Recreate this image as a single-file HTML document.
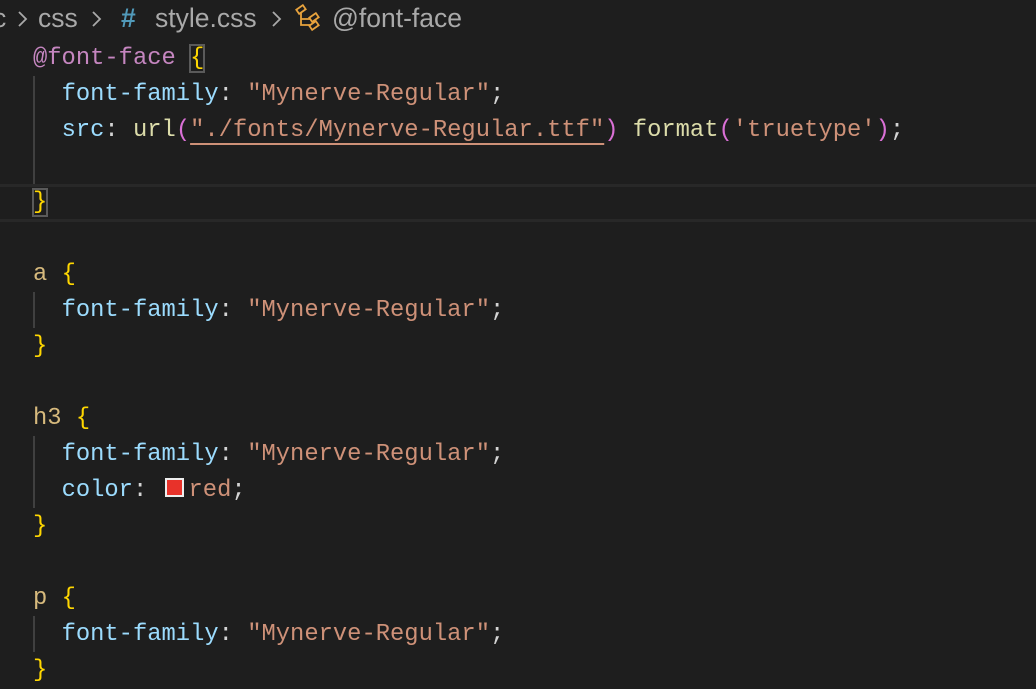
<!DOCTYPE html>
<html><head><meta charset="utf-8"><style>
html,body{margin:0;padding:0;background:#1e1e1e;width:1036px;height:676px;overflow:hidden}
.b{position:absolute;top:3px;font:26.5px/30px "Liberation Sans",sans-serif;color:#a9a9a9;white-space:pre}
.ch{position:absolute;top:10px}
.l{position:absolute;left:33px;font:23.8px/36px "Liberation Mono",monospace;white-space:pre;color:#d4d4d4}
.g{position:absolute;left:33px;width:2px;background:#404040}
.hl{position:absolute;left:0;width:1036px;top:184px;height:32px;border-top:3px solid #282828;border-bottom:3px solid #282828}
.k{color:#c586c0}.p{color:#9cdcfe}.s{color:#ce9178}.y{color:#ffd700}.f{color:#dcdcaa}.t{color:#d7ba7d}.m{color:#da70d6}
.bx{outline:2px solid #5a5a5a;outline-offset:-1px}
</style></head><body>
<div class="hl"></div>
<div class="b" style="left:-7px">c</div>
<svg class="ch" style="left:16px" width="12" height="18" viewBox="0 0 12 18"><path d="M3 2l7 7-7 7" fill="none" stroke="#a9a9a9" stroke-width="1.8"/></svg>
<div class="b" style="left:38px">css</div>
<svg class="ch" style="left:90px" width="12" height="18" viewBox="0 0 12 18"><path d="M3 2l7 7-7 7" fill="none" stroke="#a9a9a9" stroke-width="1.8"/></svg>
<div class="b" style="left:121px;color:#519aba;font-weight:bold">#</div>
<div class="b" style="left:155px">style.css</div>
<svg class="ch" style="left:270px" width="12" height="18" viewBox="0 0 12 18"><path d="M3 2l7 7-7 7" fill="none" stroke="#a9a9a9" stroke-width="1.8"/></svg>
<svg style="position:absolute;left:294px;top:4px" width="30" height="30" viewBox="0 0 30 30"><g fill="none" stroke="#e8a33d" stroke-width="1.8"><rect x="3" y="3" width="8" height="5" transform="rotate(-35 7 5.5)"/><path d="M7 9v12h9M7 15h9"/><rect x="16" y="11" width="8" height="5" transform="rotate(-35 20 13.5)"/><rect x="16" y="19" width="8" height="5" transform="rotate(-35 20 21.5)"/></g></svg>
<div class="b" style="left:332px">@font-face</div>
<div class="g" style="top:76px;height:108px"></div>
<div class="g" style="top:292px;height:36px"></div>
<div class="g" style="top:436px;height:72px"></div>
<div class="g" style="top:616px;height:36px"></div>
<div class="l" style="top:41px"><span class="k">@font-face</span> <span class="y bx">{</span></div>
<div class="l" style="top:77px">  <span class="p">font-family</span>: <span class="s">"Mynerve-Regular"</span>;</div>
<div class="l" style="top:113px">  <span class="p">src</span>: <span class="f">url</span><span class="m">(</span><span class="s" style="text-decoration:underline;text-underline-offset:7px">"./fonts/Mynerve-Regular.ttf"</span><span class="m">)</span> <span class="f">format</span><span class="m">(</span><span class="s">'truetype'</span><span class="m">)</span>;</div>
<div class="l" style="top:185px"><span class="y bx">}</span></div>
<div class="l" style="top:257px"><span class="t">a</span> <span class="y">{</span></div>
<div class="l" style="top:293px">  <span class="p">font-family</span>: <span class="s">"Mynerve-Regular"</span>;</div>
<div class="l" style="top:329px"><span class="y">}</span></div>
<div class="l" style="top:401px"><span class="t">h3</span> <span class="y">{</span></div>
<div class="l" style="top:437px">  <span class="p">font-family</span>: <span class="s">"Mynerve-Regular"</span>;</div>
<div class="l" style="top:473px">  <span class="p">color</span>: <span style="display:inline-block;width:15px;height:15px;background:#e8322a;border:2px solid #eee;vertical-align:-1px;margin-left:3px;margin-right:5px"></span><span class="s">red</span>;</div>
<div class="l" style="top:509px"><span class="y">}</span></div>
<div class="l" style="top:581px"><span class="t">p</span> <span class="y">{</span></div>
<div class="l" style="top:617px">  <span class="p">font-family</span>: <span class="s">"Mynerve-Regular"</span>;</div>
<div class="l" style="top:653px"><span class="y">}</span></div>
</body></html>
